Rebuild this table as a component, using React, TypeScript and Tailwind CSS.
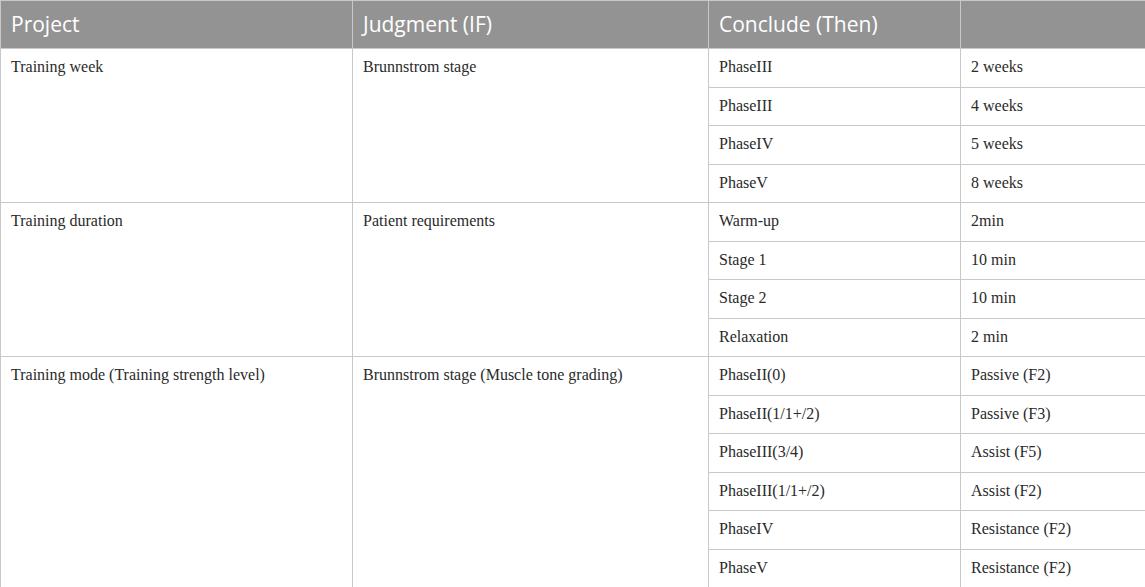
const groups = [
  {
    project: "Training week",
    judgment: "Brunnstrom stage",
    rows: [
      ["PhaseIII", "2 weeks"],
      ["PhaseIII", "4 weeks"],
      ["PhaseIV", "5 weeks"],
      ["PhaseV", "8 weeks"],
    ],
  },
  {
    project: "Training duration",
    judgment: "Patient requirements",
    rows: [
      ["Warm-up", "2min"],
      ["Stage 1", "10 min"],
      ["Stage 2", "10 min"],
      ["Relaxation", "2 min"],
    ],
  },
  {
    project: "Training mode (Training strength level)",
    judgment: "Brunnstrom stage (Muscle tone grading)",
    rows: [
      ["PhaseII(0)", "Passive (F2)"],
      ["PhaseII(1/1+/2)", "Passive (F3)"],
      ["PhaseIII(3/4)", "Assist (F5)"],
      ["PhaseIII(1/1+/2)", "Assist (F2)"],
      ["PhaseIV", "Resistance (F2)"],
      ["PhaseV", "Resistance (F2)"],
    ],
  },
];

const th = "border border-[#c8c8c8] px-[10px] text-left font-normal align-middle";
const td = "border border-[#c8c8c8] px-[10px] pt-[8px] align-top";

export default function App() {
  return (
    <div className="w-[1145px] h-[587px] bg-white overflow-hidden">
      <table className="w-[1145px] border-collapse table-fixed">
        <colgroup>
          <col className="w-[352px]" />
          <col className="w-[356px]" />
          <col className="w-[252px]" />
          <col className="w-[185px]" />
        </colgroup>
        <thead>
          <tr className="h-[48px] bg-[#939393] text-white text-[21px] font-['Open_Sans',sans-serif]">
            <th className={th}>Project</th>
            <th className={th}>Judgment (IF)</th>
            <th className={th}>Conclude (Then)</th>
            <th className={th}></th>
          </tr>
        </thead>
        <tbody className="text-[16px] text-[#2a2a2a] font-['Liberation_Serif',serif] leading-[20px]">
          {groups.map((g) =>
            g.rows.map((r, i) => (
              <tr key={g.project + i} className="h-[38.5px]">
                {i === 0 && (
                  <>
                    <td rowSpan={g.rows.length} className={td}>{g.project}</td>
                    <td rowSpan={g.rows.length} className={td}>{g.judgment}</td>
                  </>
                )}
                <td className={td}>{r[0]}</td>
                <td className={td}>{r[1]}</td>
              </tr>
            ))
          )}
        </tbody>
      </table>
    </div>
  );
}
